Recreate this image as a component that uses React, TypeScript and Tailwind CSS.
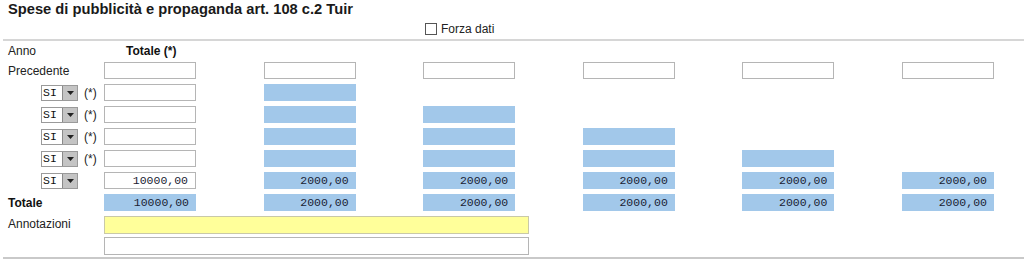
import React from 'react';

const cols = [0, 1, 2, 3, 4, 5];

type Kind = 'white' | 'blue' | 'none';

function Field({ kind, value }: { kind: Kind; value?: string }) {
  if (kind === 'none') return <div />;
  return (
    <div
      className={`h-[17px] flex items-center justify-end pr-[7px] text-[11.5px] text-[#1a2233] ${
        kind === 'white' ? 'bg-white border border-[#b5b5b5]' : 'bg-[#a2c8ea]'
      }`}
      style={{ fontFamily: '"Liberation Mono", monospace' }}
    >
      {value}
    </div>
  );
}

function SiSelect({ star }: { star: boolean }) {
  return (
    <div className="flex items-center h-[17px] pl-[41px]">
      <div className="flex h-[16px] border border-[#9a9a9a]">
        <div
          className="w-[20px] bg-white text-[11.5px] leading-[14px] pl-[1px] text-[#111]"
          style={{ fontFamily: '"Liberation Mono", monospace' }}
        >
          SI
        </div>
        <div className="w-[15px] bg-[#c4c4c4] border-l border-[#8a8a8a] flex items-center justify-center">
          <svg width="7" height="4" viewBox="0 0 7 4">
            <path d="M0 0h7L3.5 4z" fill="#222" />
          </svg>
        </div>
      </div>
      {star && <span className="ml-[6px] text-[12px] text-[#222]">(*)</span>}
    </div>
  );
}

export default function App() {
  const rows: { label: React.ReactNode; fields: { kind: Kind; value?: string }[] }[] = [
    {
      label: <span className="pl-2 text-[12px] text-[#222]">Precedente</span>,
      fields: cols.map(() => ({ kind: 'white' as Kind })),
    },
    ...[1, 2, 3, 4].map((n) => ({
      label: <SiSelect star />,
      fields: cols.map((c) => ({
        kind: (c === 0 ? 'white' : c <= n ? 'blue' : 'none') as Kind,
      })),
    })),
    {
      label: <SiSelect star={false} />,
      fields: cols.map((c) => ({
        kind: (c === 0 ? 'white' : 'blue') as Kind,
        value: c === 0 ? '10000,00' : '2000,00',
      })),
    },
    {
      label: <span className="pl-2 text-[12px] font-bold text-[#111]">Totale</span>,
      fields: cols.map((c) => ({ kind: 'blue' as Kind, value: c === 0 ? '10000,00' : '2000,00' })),
    },
  ];

  return (
    <div className="w-[1024px] h-[259px] bg-white overflow-hidden" style={{ fontFamily: '"Liberation Sans", Arial, sans-serif' }}>
      <div className="pl-2 h-[19px] text-[14.7px] font-bold text-[#1a1a1a] leading-[18px]">
        Spese di pubblicità e propaganda art. 108 c.2 Tuir
      </div>
      <div className="flex items-center h-[20px] pl-[425px]">
        <div className="w-[12px] h-[12px] border border-[#555] bg-white" />
        <span className="ml-[4px] text-[12px] text-[#222]">Forza dati</span>
      </div>
      <div className="ml-[3px] h-[2px] bg-[#d6d6d6]" />
      <div className="flex h-[20px] items-center">
        <span className="w-[104px] pl-2 text-[12px] text-[#222]">Anno</span>
        <span className="pl-[22px] text-[12px] font-bold text-[#111]">Totale (*)</span>
      </div>
      <div className="flex flex-col gap-y-[5px] mt-[1px]">
        {rows.map((r, i) => (
          <div key={i} className="flex h-[17px]">
            <div className="w-[104px] shrink-0 flex items-center">{r.label}</div>
            <div className="grid grid-cols-[repeat(6,92px)] gap-x-[67.6px]">
              {r.fields.map((f, j) => (
                <Field key={j} kind={f.kind} value={f.value} />
              ))}
            </div>
          </div>
        ))}
      </div>
      <div className="flex mt-[5px] h-[18px]">
        <span className="w-[104px] pl-2 text-[12px] text-[#222] leading-[16px]">Annotazioni</span>
        <div className="w-[425px] h-[18px] bg-[#ffff9a] border border-[#c9c9a8]" />
      </div>
      <div className="flex mt-[3px]">
        <div className="ml-[104px] w-[425px] h-[18px] bg-white border border-[#b5b5b5]" />
      </div>
      <div className="mt-[2px] ml-[3px] h-[2px] bg-[#c9c9c9]" />
    </div>
  );
}
